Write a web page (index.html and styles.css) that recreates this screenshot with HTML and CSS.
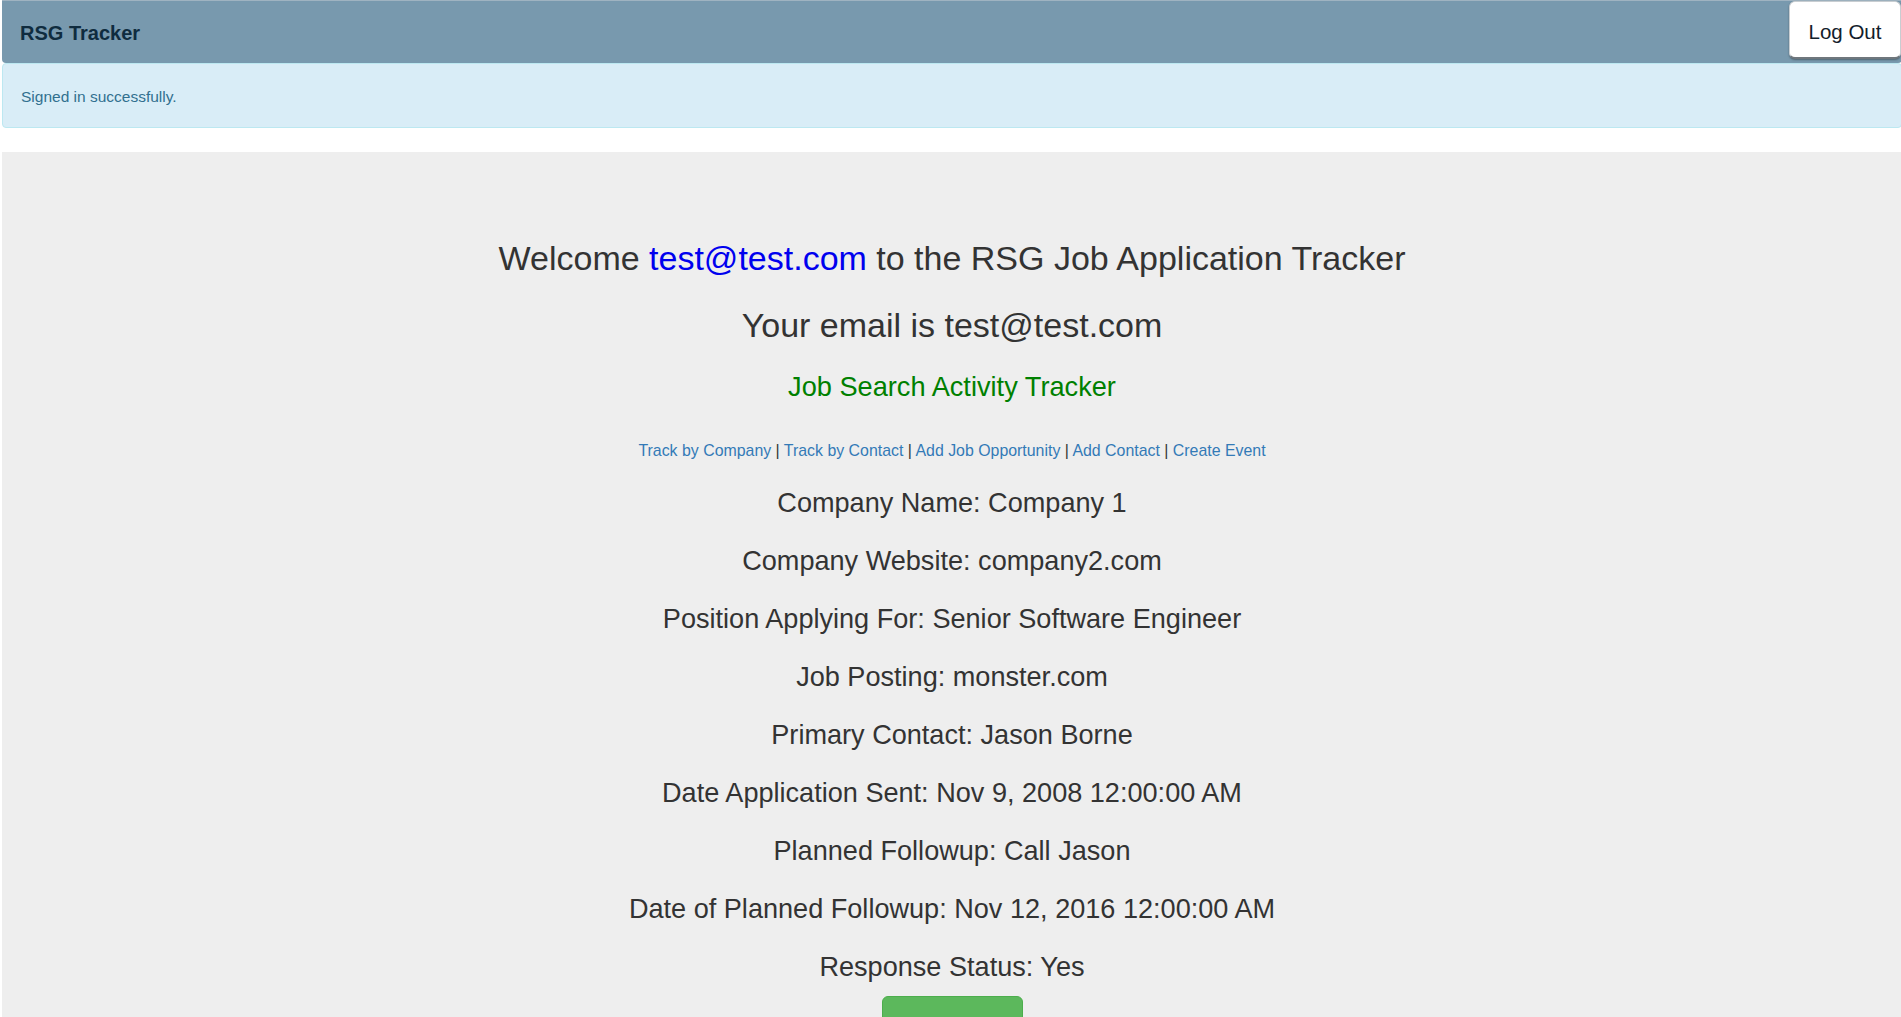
FILE: index.html
```html
<!DOCTYPE html>
<html lang="en">
<head>
<meta charset="utf-8">
<title>RSG Tracker</title>
<link rel="stylesheet" href="styles.css">
</head>
<body>
<div class="page">
  <nav class="navbar">
    <span class="brand">RSG Tracker</span>
    <button class="btn-logout" type="button">Log Out</button>
  </nav>
  <div class="alert">Signed in successfully.</div>
  <main class="jumbotron">
    <h2 class="welcome">Welcome <a class="user-link" href="#">test@test.com</a> to the RSG Job Application Tracker</h2>
    <h2 class="email">Your email is test@test.com</h2>
    <h3 class="subtitle">Job Search Activity Tracker</h3>
    <div class="links">
      <a href="#">Track by Company</a> | <a href="#">Track by Contact</a> | <a href="#">Add Job Opportunity</a> | <a href="#">Add Contact</a> | <a href="#">Create Event</a>
    </div>
    <div class="details">
      <div class="detail">Company Name: Company 1</div>
      <div class="detail">Company Website: company2.com</div>
      <div class="detail">Position Applying For: Senior Software Engineer</div>
      <div class="detail">Job Posting: monster.com</div>
      <div class="detail">Primary Contact: Jason Borne</div>
      <div class="detail">Date Application Sent: Nov 9, 2008 12:00:00 AM</div>
      <div class="detail">Planned Followup: Call Jason</div>
      <div class="detail">Date of Planned Followup: Nov 12, 2016 12:00:00 AM</div>
      <div class="detail">Response Status: Yes</div>
    </div>
    <button class="btn-success" type="button">Edit</button>
  </main>
</div>
</body>
</html>
```
FILE: styles.css
```css
html {
  overflow-x: hidden;
}
body {
  margin: 0;
  font-family: "Liberation Sans", Arial, sans-serif;
  color: #333;
  background: #fff;
}
.page {
  margin-left: 2px;
  width: 1900px;
}
.navbar {
  height: 63px;
  box-sizing: border-box;
  display: flex;
  justify-content: space-between;
  align-items: flex-start;
  background: #7899ae;
  border-top: 1px solid #9fb3c1;
  border-radius: 0 0 4px 4px;
}
.brand {
  font-size: 20px;
  font-weight: bold;
  line-height: 24px;
  color: #0f2c3f;
  margin: 20px 0 0 18px;
}
.btn-logout {
  width: 112px;
  height: 58px;
  margin: 0 1px 0 0;
  background: #fff;
  border: 1px solid #c8cdd1;
  border-bottom: 2px solid #6f777d;
  border-radius: 6px;
  box-shadow: 0 1px 2px rgba(0, 0, 0, 0.35);
  font-family: "Liberation Sans", Arial, sans-serif;
  font-size: 20.5px;
  color: #12202b;
  padding: 4px 0 0;
}
.alert {
  height: 65px;
  box-sizing: border-box;
  display: flex;
  align-items: center;
  padding: 2px 18px 0;
  background: #d9edf7;
  border: 1px solid #bce8f1;
  border-radius: 4px;
  color: #31708f;
  font-size: 15.5px;
  margin-bottom: 24px;
}
.jumbotron {
  display: block;
  background: #eee;
  padding: 87px 0 60px;
  text-align: center;
}
.welcome,
.email {
  font-size: 34px;
  line-height: 38px;
  font-weight: normal;
  margin: 0;
}
.email {
  margin-top: 29px;
}
.user-link {
  color: #0000ee;
  text-decoration: none;
}
.subtitle {
  font-size: 27.2px;
  line-height: 30px;
  font-weight: normal;
  color: #008000;
  margin: 28px 0 0;
}
.links {
  font-size: 15.9px;
  line-height: 22px;
  margin-top: 38px;
  color: #333;
}
.links a {
  color: #337ab7;
  text-decoration: none;
}
.details {
  margin-top: 26px;
  display: flex;
  flex-direction: column;
  gap: 28px;
}
.detail {
  font-size: 27.1px;
  line-height: 30px;
}
.btn-success {
  margin-top: 14px;
  width: 141px;
  height: 48px;
  padding: 12px 0 0;
  box-sizing: border-box;
  vertical-align: top;
  background: #5cb85c;
  border: 1px solid #4cae4c;
  border-radius: 6px;
  color: #fff;
  font-family: "Liberation Sans", Arial, sans-serif;
  font-size: 20px;
  line-height: 26px;
}
```
